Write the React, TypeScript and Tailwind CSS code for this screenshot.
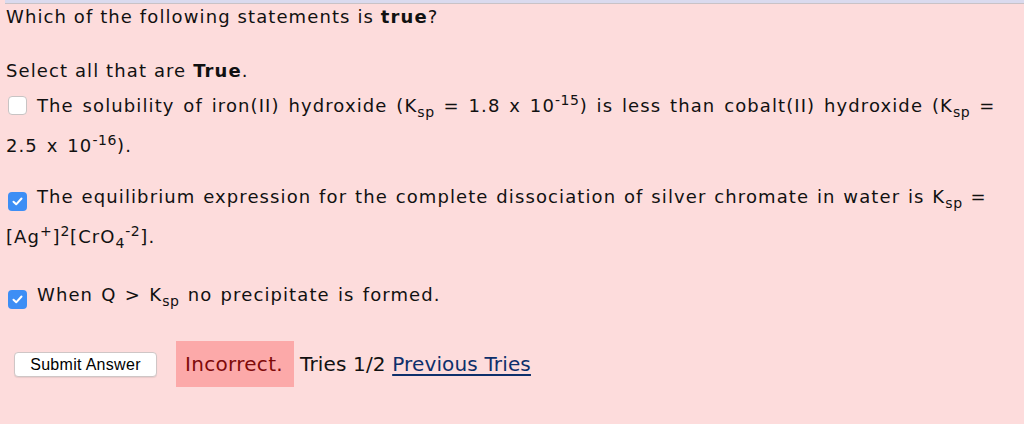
import type { ReactNode } from 'react';

function Sub({ children }: { children: ReactNode }) {
  return <span className="relative top-[5px] text-[14px] leading-none tracking-[0.6px]">{children}</span>;
}

function Sup({ children }: { children: ReactNode }) {
  return <span className="relative top-[-7px] text-[14px] leading-none tracking-[0.6px]">{children}</span>;
}

const Ksp = () => (
  <>
    K<Sub>sp</Sub>
  </>
);

function Checkbox({ checked }: { checked: boolean }) {
  return checked ? (
    <span className="inline-flex align-[-3px] w-[19px] h-[19px] ml-[2px] mr-[10px] rounded-[4px] bg-[#3d8ef5] items-center justify-center">
      <svg width="11" height="9" viewBox="0 0 11 9" fill="none">
        <path
          d="M1.5 4.8 L4.2 7.3 L9.5 1.5"
          stroke="white"
          strokeWidth="2"
          strokeLinecap="round"
          strokeLinejoin="round"
        />
      </svg>
    </span>
  ) : (
    <span className="inline-block align-[-3px] w-[19px] h-[19px] ml-[2px] mr-[10px] rounded-[4px] bg-white border border-[#c8c4c4]" />
  );
}

export default function App() {
  return (
    <div
      className="w-[1024px] h-[424px] bg-[#fddcdc] text-[#111] text-[18px] tracking-[1.1px] overflow-hidden"
      style={{ fontFamily: '"DejaVu Sans", Verdana, sans-serif' }}
    >
      <div className="ml-[5px] h-[4px] bg-[#dadaee] border-b border-[#c9c2c6]" />
      <div className="pl-[6px]">
        <p className="leading-[26px]">
          Which of the following statements is <b>true</b>?
        </p>
        <p className="leading-[26px] mt-[28px]">
          Select all that are <b>True</b>.
        </p>

        <p className="leading-[40px] mt-[2px] whitespace-nowrap [word-spacing:2px]">
          <Checkbox checked={false} />
          The solubility of iron(II) hydroxide (<Ksp /> = 1.8 x 10
          <Sup>-15</Sup>) is less than cobalt(II) hydroxide (<Ksp /> =
          <br />
          2.5 x 10<Sup>-16</Sup>).
        </p>

        <p className="leading-[40px] mt-[11px] whitespace-nowrap [word-spacing:1px]">
          <Checkbox checked />
          The equilibrium expression for the complete dissociation of silver
          chromate in water is <Ksp /> =
          <br />
          [Ag<Sup>+</Sup>]<Sup>2</Sup>[CrO<Sub>4</Sub>
          <Sup>-2</Sup>].
        </p>

        <p className="leading-[40px] mt-[18px] [word-spacing:1.4px]">
          <Checkbox checked />
          When Q &gt; <Ksp /> no precipitate is formed.
        </p>

        <div className="flex items-center mt-[26px] tracking-normal">
          <button
            className="ml-[8px] w-[143px] h-[25px] bg-white border border-[#cfc6c6] rounded-[4px] text-[16px] tracking-[0.3px] text-black shadow-[0_1px_1px_rgba(0,0,0,0.08)]"
            style={{ fontFamily: '"Liberation Sans", Arial, sans-serif' }}
          >
            Submit Answer
          </button>
          <span className="ml-[19px] h-[46px] flex items-center pl-[9px] pr-[11px] bg-[#fca9a9] text-[#7f0a0a] text-[20px] tracking-[0.3px]">
            Incorrect.
          </span>
          <span className="ml-[6px] text-[20px] tracking-[0.15px]">
            Tries 1/2{' '}
            <a href="#" className="text-[#0d2f6b] underline underline-offset-[3px]">
              Previous Tries
            </a>
          </span>
        </div>
      </div>
    </div>
  );
}
